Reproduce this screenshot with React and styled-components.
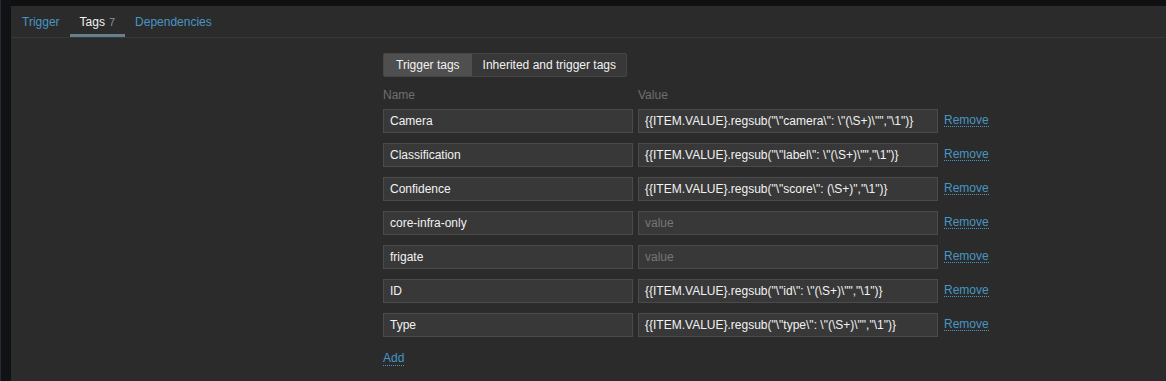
import React from "react";
import styled, { createGlobalStyle } from "styled-components";

const Global = createGlobalStyle`
  html, body { margin: 0; padding: 0; background: #0f1012; }
  body { font-family: "Liberation Sans", Arial, sans-serif; font-size: 12px; }
`;

const Page = styled.div`
  display: flex;
  height: 381px;
  background: #0f1012;
  overflow: hidden;
`;

const SideStrip = styled.div`
  width: 11px;
  flex: none;
  background: #111215;
  border-left: 1px solid #2a2b2e;
  box-sizing: border-box;
`;

const Main = styled.div`
  flex: 1;
  margin-top: 6px;
  background: #2b2b2b;
  display: flex;
  flex-direction: column;
`;

const TabBar = styled.div`
  display: flex;
  height: 31px;
  padding-left: 1px;
  border-bottom: 1px solid #383838;
`;

const Tab = styled.div`
  display: flex;
  align-items: center;
  padding: 3px 10px 0;
  color: ${(p) => (p.$active ? "#f2f2f2" : "#4796c4")};
  border-bottom: 3px solid ${(p) => (p.$active ? "#64808f" : "transparent")};
  font-size: 12px;
`;

const Count = styled.span`
  color: #8f8f8f;
  font-size: 11px;
  margin-left: 4px;
`;

const Content = styled.div`
  padding: 15px 0 0 372px;
  display: flex;
  flex-direction: column;
  align-items: flex-start;
`;

const Segmented = styled.div`
  display: flex;
  height: 24px;
  border: 1px solid #464646;
  border-radius: 2px;
  box-sizing: border-box;
  background: #383838;
  overflow: hidden;
`;

const Segment = styled.div`
  display: flex;
  align-items: center;
  padding: ${(p) => (p.$active ? "0 12px" : "0 10px 0 11px")};
  color: #f2f2f2;
  background: ${(p) => (p.$active ? "#4f4f4f" : "transparent")};
  font-size: 12px;
`;

const Grid = styled.div`
  display: grid;
  grid-template-columns: 250px 300px auto;
  column-gap: 5px;
  row-gap: 10px;
  margin-top: 11px;
  align-items: center;
`;

const HeadCell = styled.div`
  color: #6f6f6f;
  font-size: 12px;
  line-height: 14px;
  margin-bottom: -3px;
`;

const Field = styled.div`
  height: 24px;
  box-sizing: border-box;
  border: 1px solid #4b4b4b;
  background: #383838;
  color: ${(p) => (p.$placeholder ? "#767676" : "#f2f2f2")};
  padding: 0 6px;
  display: flex;
  align-items: center;
  font-size: 12px;
  white-space: nowrap;
  overflow: hidden;
`;

const Link = styled.span`
  color: #4796c4;
  font-size: 12px;
  border-bottom: 1px dotted #4796c4;
  line-height: 12px;
  margin-left: ${(p) => p.$ml || 0}px;
  margin-top: ${(p) => p.$mt || 0}px;
  justify-self: start;
  align-self: start;
`;

const AddRow = styled.div`
  margin-top: 14px;
`;

const rows = [
  ["Camera", String.raw`{{ITEM.VALUE}.regsub("\"camera\": \"(\S+)\"","\1")}`],
  ["Classification", String.raw`{{ITEM.VALUE}.regsub("\"label\": \"(\S+)\"","\1")}`],
  ["Confidence", String.raw`{{ITEM.VALUE}.regsub("\"score\": (\S+)","\1")}`],
  ["core-infra-only", ""],
  ["frigate", ""],
  ["ID", String.raw`{{ITEM.VALUE}.regsub("\"id\": \"(\S+)\"","\1")}`],
  ["Type", String.raw`{{ITEM.VALUE}.regsub("\"type\": \"(\S+)\"","\1")}`],
];

export default function App() {
  return (
    <>
      <Global />
      <Page>
        <SideStrip />
        <Main>
          <TabBar>
            <Tab>Trigger</Tab>
            <Tab $active>
              Tags<Count>7</Count>
            </Tab>
            <Tab>Dependencies</Tab>
          </TabBar>
          <Content>
            <Segmented>
              <Segment $active>Trigger tags</Segment>
              <Segment>Inherited and trigger tags</Segment>
            </Segmented>
            <Grid>
              <HeadCell>Name</HeadCell>
              <HeadCell>Value</HeadCell>
              <div />
              {rows.map(([name, value]) => (
                <React.Fragment key={name}>
                  <Field>{name}</Field>
                  <Field $placeholder={!value}>{value || "value"}</Field>
                  <Link $ml={1} $mt={5}>Remove</Link>
                </React.Fragment>
              ))}
            </Grid>
            <AddRow>
              <Link>Add</Link>
            </AddRow>
          </Content>
        </Main>
      </Page>
    </>
  );
}
